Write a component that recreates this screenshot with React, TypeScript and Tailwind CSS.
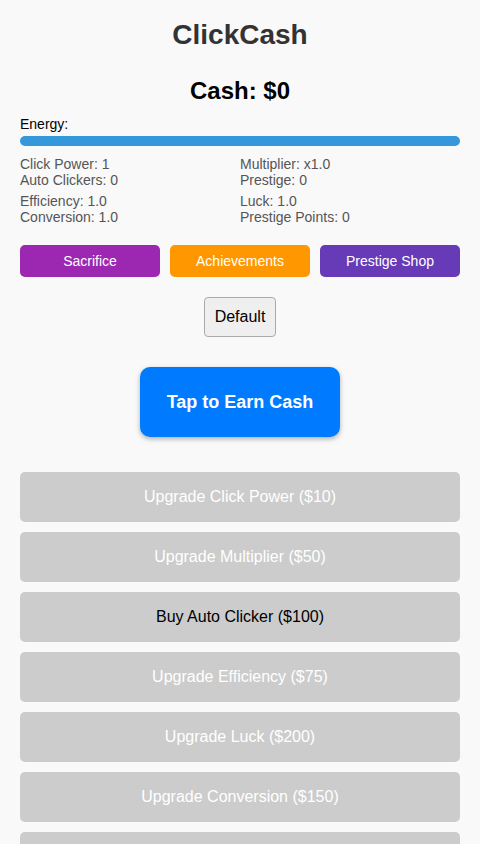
const stats = [
  ['Click Power: 1', 'Auto Clickers: 0', 'Multiplier: x1.0', 'Prestige: 0'],
  ['Efficiency: 1.0', 'Conversion: 1.0', 'Luck: 1.0', 'Prestige Points: 0'],
];

const upgrades = [
  { label: 'Upgrade Click Power ($10)', enabled: false },
  { label: 'Upgrade Multiplier ($50)', enabled: false },
  { label: 'Buy Auto Clicker ($100)', enabled: true },
  { label: 'Upgrade Efficiency ($75)', enabled: false },
  { label: 'Upgrade Luck ($200)', enabled: false },
  { label: 'Upgrade Conversion ($150)', enabled: false },
  { label: 'Upgrade Prestige ($500)', enabled: false },
];

export default function App() {
  return (
    <div className="min-h-screen bg-[#f9f9f9] px-5 font-['Liberation_Sans',Arial,sans-serif]">
      <h1 className="pt-[19px] text-center text-[28px] font-bold leading-[32px] text-[#333]">
        ClickCash
      </h1>

      <div className="mt-[26px] text-center text-[24px] font-bold leading-[28px] text-black">
        Cash: $0
      </div>

      <div className="mt-[11px] text-[14px] leading-[16px] text-black">Energy:</div>
      <div className="mt-[4px] h-[10px] w-full rounded-full bg-[#3498db]" />

      <div className="mt-[10px] flex flex-col gap-[5px]">
        {stats.map((row, i) => (
          <div key={i} className="grid grid-cols-2 text-[14px] leading-[16px] text-[#555]">
            <div>
              <div>{row[0]}</div>
              <div>{row[1]}</div>
            </div>
            <div>
              <div>{row[2]}</div>
              <div>{row[3]}</div>
            </div>
          </div>
        ))}
      </div>

      <div className="mt-[20px] grid grid-cols-3 gap-[10px]">
        <button className="h-[32px] rounded-[5px] bg-[#9c27b0] text-[14px] text-white">Sacrifice</button>
        <button className="h-[32px] rounded-[5px] bg-[#ff9800] text-[14px] text-white">Achievements</button>
        <button className="h-[32px] rounded-[5px] bg-[#673ab7] text-[14px] text-white">Prestige Shop</button>
      </div>

      <div className="mt-[20px] flex justify-center">
        <button className="h-[40px] w-[72px] rounded-[4px] border border-[#aaa] bg-[#efefef] text-[16px] text-black">
          Default
        </button>
      </div>

      <div className="mt-[30px] flex justify-center">
        <button className="h-[70px] w-[200px] rounded-[10px] bg-[#007bff] text-[18px] font-bold text-white shadow-[0_2px_5px_rgba(0,0,0,0.3)]">
          Tap to Earn Cash
        </button>
      </div>

      <div className="mt-[35px] flex flex-col gap-[10px] pb-5">
        {upgrades.map((u) => (
          <button
            key={u.label}
            className={`h-[50px] w-full rounded-[5px] bg-[#ccc] text-[16px] ${u.enabled ? 'text-black' : 'text-white'}`}
          >
            {u.label}
          </button>
        ))}
      </div>
    </div>
  );
}
